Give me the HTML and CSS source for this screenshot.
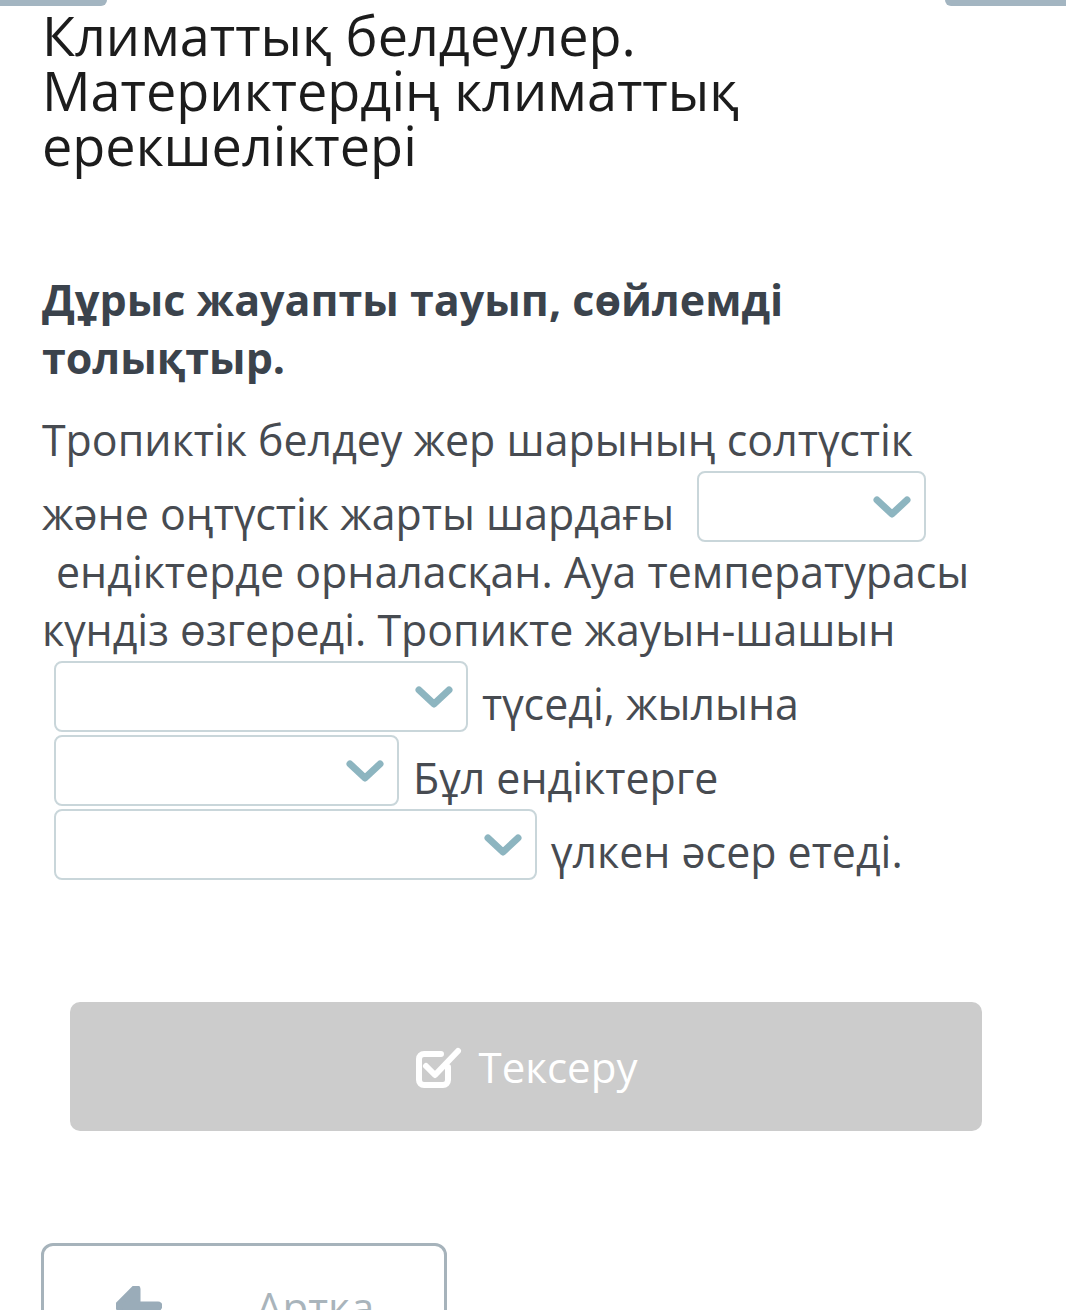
FILE: index.html
```html
<!DOCTYPE html>
<html lang="kk">
<head>
<meta charset="utf-8">
<title>Климаттық белдеулер</title>
<link rel="stylesheet" href="styles.css">
</head>
<body>
<div class="tabs">
  <span class="tab tab-left"></span>
  <span class="tab tab-right"></span>
</div>
<main class="page">
  <h1 class="title">Климаттық белдеулер. Материктердің климаттық ерекшеліктері</h1>
  <h2 class="task">Дұрыс жауапты тауып, сөйлемді толықтыр.</h2>
  <p class="question">Тропиктік белдеу жер шарының солтүстік және оңтүстік жарты шардағы <span class="select w1"><svg class="chev" viewBox="0 0 40 24"><polyline points="5,5 20,19 35,5"/></svg></span><span class="after">ендіктерде</span> орналасқан. Ауа температурасы күндіз өзгереді. Тропикте жауын-шашын <span class="select w2"><svg class="chev" viewBox="0 0 40 24"><polyline points="5,5 20,19 35,5"/></svg></span><span class="after">түседі,</span> жылына <span class="select w3"><svg class="chev" viewBox="0 0 40 24"><polyline points="5,5 20,19 35,5"/></svg></span><span class="after">Бұл</span> ендіктерге <span class="select w4"><svg class="chev" viewBox="0 0 40 24"><polyline points="5,5 20,19 35,5"/></svg></span><span class="after">үлкен</span> әсер етеді.</p>
  <button class="check" type="button">
    <svg class="check-icon" viewBox="0 0 48 44"><path d="M33 22 V35 a5 5 0 0 1 -5 5 H9 a5 5 0 0 1 -5 -5 V14 a5 5 0 0 1 5 -5 H26"/><polyline points="11,21 20,30 43,6"/></svg>
    <span>Тексеру</span>
  </button>
  <button class="back" type="button">
    <svg class="back-icon" viewBox="0 0 46 40"><path class="head" d="M20 3 L3 20 L20 37 Z"/><path d="M10 20 L42 20"/></svg>
    <span>Артқа</span>
  </button>
</main>
</body>
</html>
```

FILE: styles.css
```css
html, body {
  margin: 0;
  padding: 0;
  background: #ffffff;
}
body {
  font-family: "Open Sans", "Noto Sans", sans-serif;
  width: 1066px;
  overflow: hidden;
}
.tabs {
  display: flex;
  justify-content: space-between;
  height: 6px;
}
.tab {
  display: block;
  height: 6px;
  background: #a3b5c1;
}
.tab-left {
  width: 107px;
  border-bottom-right-radius: 8px;
}
.tab-right {
  width: 121px;
  border-bottom-left-radius: 8px;
}
.page {
  padding: 0 42px;
}
.title {
  margin: 2px 0 0;
  width: 780px;
  font-size: 54px;
  line-height: 55px;
  font-weight: 400;
  color: #1c1c1c;
}
.task {
  margin: 98px 0 0;
  width: 820px;
  font-size: 43px;
  line-height: 58px;
  font-weight: 700;
  color: #3b434c;
}
.question {
  margin: 24px 0 0;
  width: 955px;
  font-size: 42.9px;
  line-height: 58px;
  color: #474b51;
}
.select {
  display: inline-block;
  box-sizing: border-box;
  height: 71px;
  margin: 2px 0 1px 12px;
  vertical-align: -13px;
  border: 2px solid #c9d6da;
  border-radius: 8px;
  background: #fff;
  position: relative;
}
.w1 { width: 229px; }
.w2 { width: 414px; }
.w3 { width: 345px; }
.w4 { width: 483px; }
.chev {
  position: absolute;
  right: 12px;
  top: 22px;
  width: 40px;
  height: 24px;
  fill: none;
  stroke: #8db5c0;
  stroke-width: 7;
  stroke-linecap: round;
  stroke-linejoin: round;
}
.after {
  padding-left: 14px;
}
.check {
  display: flex;
  align-items: center;
  justify-content: center;
  gap: 16px;
  margin: 121px 0 0 28px;
  width: 912px;
  height: 129px;
  border: none;
  border-radius: 10px;
  background: #cccccc;
  color: #ffffff;
  font-family: "Open Sans", "Noto Sans", sans-serif;
  font-size: 42px;
}
.check-icon {
  width: 48px;
  height: 44px;
  fill: none;
  stroke: #ffffff;
  stroke-width: 6;
  stroke-linecap: round;
  stroke-linejoin: round;
}
.back {
  display: flex;
  align-items: center;
  gap: 94px;
  margin: 112px 0 0 -1px;
  width: 406px;
  height: 126px;
  padding: 0 0 0 72px;
  border: 3px solid #a6b3bb;
  border-radius: 12px;
  background: #fff;
  color: #a9b4bb;
  font-family: "Open Sans", "Noto Sans", sans-serif;
  font-size: 42px;
}
.back-icon {
  width: 46px;
  height: 40px;
  fill: none;
  stroke: #9aacb9;
  stroke-width: 9;
  stroke-linecap: round;
  stroke-linejoin: round;
}
.back-icon .head {
  fill: #9aacb9;
}
```
